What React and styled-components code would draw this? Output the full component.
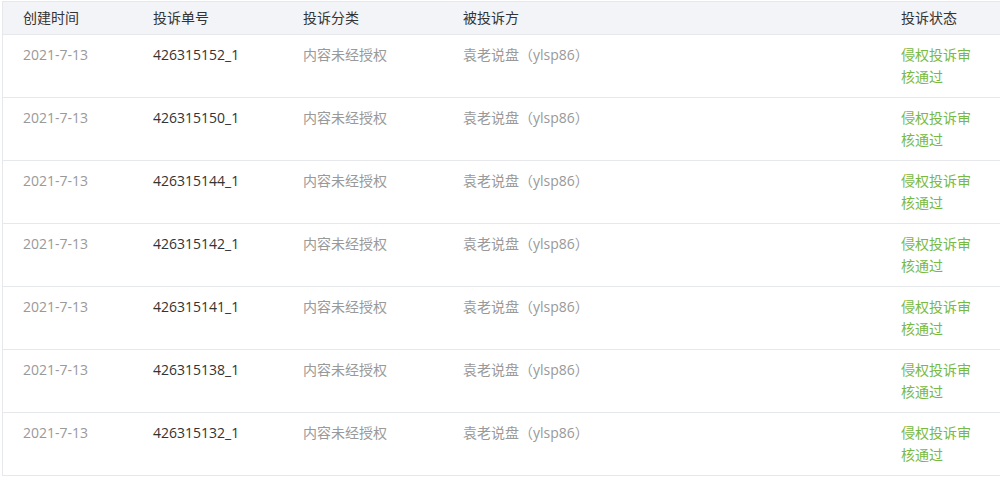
import React from 'react';
import styled, { createGlobalStyle } from 'styled-components';

const GlobalStyle = createGlobalStyle`
    html, body {
        margin: 0;
        padding: 0;
        background: #fff;
        overflow: hidden;
    }
    body {
        font-family: "Open Sans", "Noto Sans CJK SC", sans-serif;
        font-size: 14px;
    }
`;

const Wrapper = styled.div`
    padding: 1px 0 0 2px;
`;

const Table = styled.div`
    border-top: 1px solid #e6e8ec;
    border-left: 1px solid #e6e8ec;
`;

const COLS = '130px 150px 160px 438px 1fr';

const HeadRow = styled.div`
    display: grid;
    grid-template-columns: ${COLS};
    height: 32px;
    background: #f3f4f8;
    border-bottom: 1px solid #e6e8ec;
    align-items: center;
`;

const HeadCell = styled.div`
    padding: 0 0 1px 20px;
    color: #333;
    line-height: 22px;
`;

const Row = styled.div`
    display: grid;
    grid-template-columns: ${COLS};
    height: 62px;
    border-bottom: 1px solid #e6e8ec;
    box-sizing: content-box;
`;

const Cell = styled.div`
    padding: 9px 0 0 20px;
    line-height: 22px;
    color: ${p => p.color || '#999'};
`;

const StatusText = styled.div`
    width: 72px;
    color: #78b943;
    line-height: 22px;
`;

const rows = [
    '426315152_1',
    '426315150_1',
    '426315144_1',
    '426315142_1',
    '426315141_1',
    '426315138_1',
    '426315132_1',
];

export default function App() {
    return (
        <Wrapper>
            <GlobalStyle />
            <Table>
                <HeadRow>
                    <HeadCell>创建时间</HeadCell>
                    <HeadCell>投诉单号</HeadCell>
                    <HeadCell>投诉分类</HeadCell>
                    <HeadCell>被投诉方</HeadCell>
                    <HeadCell>投诉状态</HeadCell>
                </HeadRow>
                {rows.map(id => (
                    <Row key={id}>
                        <Cell>2021-7-13</Cell>
                        <Cell color="#333">{id}</Cell>
                        <Cell>内容未经授权</Cell>
                        <Cell>袁老说盘（ylsp86）</Cell>
                        <Cell>
                            <StatusText>侵权投诉审核通过</StatusText>
                        </Cell>
                    </Row>
                ))}
            </Table>
        </Wrapper>
    );
}
